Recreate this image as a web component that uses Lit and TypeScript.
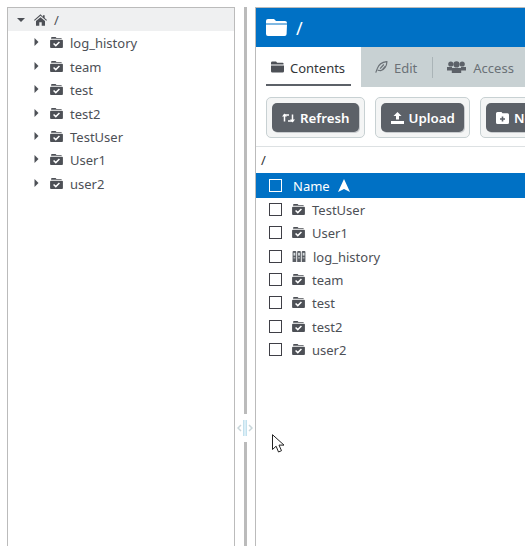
import { LitElement, html, css } from "lit";
import { customElement } from "lit/decorators.js";

const folderCheck = html`<svg class="ic" viewBox="0 0 14 12"><path fill="#4d5056" d="M2 0h4l1 1.200h5a1 1 0 0 1 .9.8H1.100V1a1 1 0 0 1 .9-1z"/><path fill="#4d5056" d="M1 3h12a1 1 0 0 1 1 1v7a1 1 0 0 1-1 1H1a1 1 0 0 1-1-1V4a1 1 0 0 1 1-1z"/><path fill="none" stroke="#fff" stroke-width="1.600" d="M3.800 7.100l2.400 2.300 4-4"/></svg>`;
const books = html`<svg class="ic books" viewBox="0 0 14 12"><g fill="#5a5e64"><path d="M0 1a1 1 0 0 1 1-1h2a1 1 0 0 1 1 1v11H0z"/><path d="M5 1a1 1 0 0 1 1-1h2a1 1 0 0 1 1 1v11H5z"/><path d="M10 1a1 1 0 0 1 1-1h2a1 1 0 0 1 1 1v11h-4z"/></g><g fill="#d5dcde"><rect x="1" y="2" width="2" height="3"/><rect x="6" y="2" width="2" height="3"/><rect x="11" y="2" width="2" height="3"/><rect x="1" y="7" width="2" height="1"/><rect x="6" y="7" width="2" height="1"/><rect x="11" y="7" width="2" height="1"/></g></svg>`;
const caretR = html`<svg class="caret" viewBox="0 0 5 8"><path fill="#4d5056" d="M0.500 0l4 4-4 4z"/></svg>`;

const treeItems = ["log_history", "team", "test", "test2", "TestUser", "User1", "user2"];
const rows = ["TestUser", "User1", "log_history", "team", "test", "test2", "user2"];

@customElement("app-root")
export class AppRoot extends LitElement {
  static styles = css`
    :host { display: block; width: 525px; height: 547px; overflow: hidden; position: relative; background: #fff; font-family: "Noto Sans", sans-serif; font-size: 13px; color: #4d5056; }
    .page { display: flex; height: 546px; padding-left: 7px; padding-top: 7px; box-sizing: border-box; }
    .left { width: 228px; flex: none; box-sizing: border-box; border: 1px solid #bbb; border-bottom: 0; }
    .tree-root { height: 23px; background: #eff0f1; display: flex; align-items: center; padding-left: 9px; gap: 9px; }
    .tree-root .down { width: 8px; height: 4px; }
    .home { width: 13px; height: 12px; }
    .tree-root span { margin-left: -2px; }
    .tree-list { padding-top: 0.700px; }
    .tree-row { height: 23.400px; display: flex; align-items: center; padding-left: 26px; }
    .caret { width: 5px; height: 8px; margin-right: 11px; margin-top: -2px; }
    .ic { width: 13px; height: 11px; flex: none; }
    .tree-row .ic { margin-right: 7px; margin-top: -1px; }
    .split { width: 20px; flex: none; display: flex; justify-content: center; }
    .split i { width: 3px; background: #bbb; display: block; }
    .right { flex: 1; min-width: 0; box-sizing: border-box; border-left: 1px solid #bbb; border-top: 1px solid #bbb; overflow: hidden; }
    .head { height: 39px; background: #0071c5; color: #fff; display: flex; align-items: center; padding-left: 10px; gap: 9px; font-size: 18px; }
    .head svg { width: 21px; height: 17px; }
    .tabs { height: 40px; background: #c8d1d3; display: flex; }
    .tab { display: flex; align-items: center; gap: 6px; height: 100%; box-sizing: border-box; padding-top: 2px; color: #6b7177; }
    .tab.on { background: #fff; width: 105px; padding-left: 15px; color: #33363a; flex: none; position: relative; }
    .tab.on::after { content: ""; position: absolute; left: 10px; width: 85px; top: 37px; height: 2px; background: #5c6168; }
    .tab svg { width: 13px; height: 12px; flex: none; margin-top: -2px; }
    .tab.edit { padding-left: 14px; padding-right: 15px; }
    .sep { width: 1px; height: 21px; background: #aab4b7; align-self: center; }
    .tab.access { padding-left: 14px; gap: 7px; }
    .tab.access svg { width: 19px; }
    .toolbar { display: flex; gap: 10px; padding: 10px 0 8px 10px; height: 60px; box-sizing: border-box; border-bottom: 1px solid #dde1e3; white-space: nowrap; }
    .grp { padding: 5px; border: 1px solid #c8d1d3; border-radius: 5px; background: #f4f5f5; flex: none; height: 41px; box-sizing: border-box; display: flex; }
    .btn { background: #5c6168; color: #fff; border-radius: 5px; box-shadow: 1px 1px 0 #c9cccf; display: flex; align-items: center; gap: 5px; height: 29px; padding: 0 9px 0 10px; font-weight: 600; font-size: 13.300px; box-sizing: border-box; }
    .btn svg { width: 13px; height: 12px; flex: none; }
    .crumb { height: 26px; display: flex; align-items: center; padding-left: 5px; color: #333; box-sizing: border-box; }
    .thead { height: 25px; background: #0071c5; color: #fff; display: flex; align-items: center; padding-left: 13px; }
    .cb { width: 11px; height: 11px; border: 1px solid #3f3f46; flex: none; margin-right: 10px; margin-top: -1px; }
    .thead .cb { border-color: #fff; margin-right: 11px; margin-top: 0; }
    .thead svg { width: 12px; height: 13px; margin-left: 8px; }
    .row { height: 23.350px; display: flex; align-items: center; padding-left: 13px; }
    .row .ic { margin-right: 7px; margin-top: -1px; }
    .row .ic.books { width: 14px; margin-right: 7px; }
    .rows { padding-top: 0.300px; }
    .grip { position: absolute; left: 235px; top: 414px; width: 20px; height: 28px; background: #fff; display: flex; align-items: center; justify-content: center; }
    .grip svg { width: 16px; height: 16px; }
    .cursor { position: absolute; left: 272px; top: 434px; width: 13px; height: 20px; }
  `;

  render() {
    return html`
      <div class="page">
        <div class="left">
          <div class="tree-root">
            <svg class="down" viewBox="0 0 8 4"><path fill="#4d5056" d="M0 0h8L4 4z"/></svg>
            <svg class="home" viewBox="0 0 15 13"><path fill="#4d5056" d="M7.500 0L0 6.400l.8.9L7.500 1.700l6.700 5.600.8-.9-2.700-2.300V1h-2v1.700zM2.300 7.600V13h3.800V9h2.800v4h3.800V7.600L7.500 3.200z"/></svg>
            <span>/</span>
          </div>
          <div class="tree-list">
            ${treeItems.map((t) => html`<div class="tree-row">${caretR}${folderCheck}<span>${t}</span></div>`)}
          </div>
        </div>
        <div class="split"><i></i></div>
        <div class="right">
          <div class="head">
            <svg viewBox="0 0 21 17"><path fill="#fff" d="M2 0h6l2 2h9a2 2 0 0 1 2 2v.6H0V2a2 2 0 0 1 2-2z"/><path fill="#fff" d="M0 5.600h21l-.4 9.400a2 2 0 0 1-2 2H2a2 2 0 0 1-2-2z"/></svg>
            <span>/</span>
          </div>
          <div class="tabs">
            <div class="tab on">
              <svg viewBox="0 0 14 12"><path fill="#4d5056" d="M1.500 0h4l1 1.300h6a1 1 0 0 1 1 1V3.300H0V1.500A1.500 1.500 0 0 1 1.500 0zM0 4.500h14V10.500A1.500 1.500 0 0 1 12.500 12h-11A1.500 1.500 0 0 1 0 10.500z"/></svg>
              <span>Contents</span>
            </div>
            <div class="tab edit">
              <svg viewBox="0 0 14 13"><path fill="none" stroke="#6b7177" stroke-width="1.300" d="M.8 12.600L2.500 8C3.500 5 7 1.300 12.800.6 13 5 10 9.500 6 10.500L2.800 10M5.500 8.200L9.500 3.800M8 9.300l3-3.500"/></svg>
              <span>Edit</span>
            </div>
            <div class="sep"></div>
            <div class="tab access">
              <svg viewBox="0 0 19 12"><g fill="#5c6168"><circle cx="3.800" cy="3" r="2.600"/><circle cx="15.200" cy="3" r="2.600"/><circle cx="9.500" cy="3.400" r="3.100"/><path d="M0 6h5v3.500H0zM14 6h5v3.500h-5zM4.800 7h9.400v5H4.800z"/></g></svg>
              <span>Access</span>
            </div>
          </div>
          <div class="toolbar">
            <div class="grp"><div class="btn">
              <svg viewBox="0 0 13 10"><path fill="none" stroke="#fff" stroke-width="1.500" d="M2.500 8.500V2H7M10.500 1.500V8H6"/><path fill="#fff" d="M0 3.500L2.500 0.500 5 3.500zM8 6.500L10.500 9.500 13 6.500z"/></svg>
              <span>Refresh</span></div></div>
            <div class="grp"><div class="btn">
              <svg viewBox="0 0 13 12"><path fill="#fff" d="M6.500 0L10.500 4H8V7.500H5V4H2.500zM0 9h13v3H0z"/></svg>
              <span>Upload</span></div></div>
            <div class="grp"><div class="btn">
              <svg viewBox="0 0 13 12"><path fill="#fff" d="M1.500 0h4l1 1.300h5A1.500 1.500 0 0 1 13 2.800V10.500A1.500 1.500 0 0 1 11.500 12h-10A1.500 1.500 0 0 1 0 10.500V1.500A1.500 1.500 0 0 1 1.500 0z"/><path fill="#5c6168" d="M5.700 4.500h1.600v1.700H9v1.600H7.300v1.700H5.700V7.800H4V6.200h1.700z"/></svg>
              <span>New</span></div></div>
          </div>
          <div class="crumb">/</div>
          <div class="thead">
            <div class="cb"></div>
            <span>Name</span>
            <svg viewBox="0 0 12 13"><path fill="#fff" d="M6 0L12 13 6 10 0 13z"/></svg>
          </div>
          <div class="rows">
            ${rows.map((r) => html`<div class="row"><div class="cb"></div>${r === "log_history" ? books : folderCheck}<span>${r}</span></div>`)}
          </div>
        </div>
      </div>
      <div class="grip">
        <svg viewBox="0 0 16 16"><path fill="none" stroke="#c8d6da" stroke-width="1.500" d="M4 5L1 8l3 3M12 5l3 3-3 3"/><path fill="none" stroke="#bfe0ee" stroke-width="1.500" d="M6.800 0v16M9.200 0v16"/></svg>
      </div>
      <svg class="cursor" viewBox="0 0 13 20"><path fill="#fff" stroke="#222" stroke-width="1" d="M.5.700V15.500l3.600-3.300 2.400 5.800 3-1.300-2.500-5.600h5z"/></svg>
    `;
  }
}
